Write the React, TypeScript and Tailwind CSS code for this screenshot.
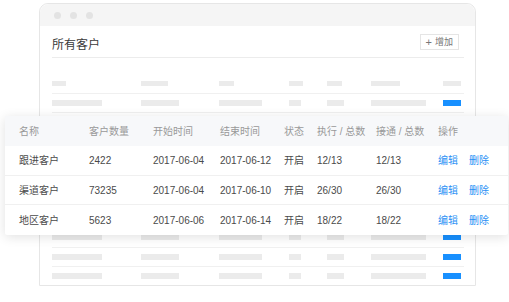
import React from "react";

const font = { fontFamily: '"Liberation Sans", "Noto Sans CJK SC", sans-serif' };

// skeleton column offsets / widths inside the window
const headBars = [
    { w: "w-[14px]", col: "w-[89px]" },
    { w: "w-[27px]", col: "w-[78px]" },
    { w: "w-[15px]", col: "w-[70px]" },
    { w: "w-[14px]", col: "w-[38px]" },
    { w: "w-[15px]", col: "w-[44px]" },
    { w: "w-[29px]", col: "w-[72px]" },
];

const rowBars = [
    { w: "w-[50px]", col: "w-[89px]" },
    { w: "w-[38px]", col: "w-[78px]" },
    { w: "w-[43px]", col: "w-[70px]" },
    { w: "w-[12px]", col: "w-[38px]" },
    { w: "w-[17px]", col: "w-[44px]" },
    { w: "w-[55px]", col: "w-[72px]" },
];

const customers = [
    { name: "跟进客户", count: "2422", start: "2017-06-04", end: "2017-06-12", status: "开启", exec: "12/13", conn: "12/13" },
    { name: "渠道客户", count: "73235", start: "2017-06-04", end: "2017-06-10", status: "开启", exec: "26/30", conn: "26/30" },
    { name: "地区客户", count: "5623", start: "2017-06-06", end: "2017-06-14", status: "开启", exec: "18/22", conn: "18/22" },
];

const cols = ["w-[70px]", "w-[64px]", "w-[67px]", "w-[64px]", "w-[33px]", "w-[59px]", "w-[62px]"];

function SkeletonRow({ last }: { last?: boolean }) {
    return (
        <div className={`flex h-[19.2px] items-center ${last ? "" : "border-b border-[#f0f0f0]"}`}>
            {rowBars.map((b, i) => (
                <div key={i} className={b.col}>
                    <div className={`h-[6px] ${b.w} bg-[#ebebeb]`} />
                </div>
            ))}
            <div className="h-[6px] w-[18px] bg-[#1890ff]" />
        </div>
    );
}

export default function App() {
    return (
        <div className="relative h-[302px] w-[509px] overflow-hidden bg-white" style={font}>
            <div className="pl-[39px] pt-[3px]">
                {/* Window */}
                <div className="h-[283px] w-[437px] rounded-t-[9px] border border-[#e6e6e6] bg-white">
                    {/* title bar */}
                    <div className="flex h-[22px] items-center gap-[9px] rounded-t-[9px] bg-[#f5f5f5] pl-[14px]">
                        <span className="h-[7px] w-[7px] rounded-full bg-[#e3e3e3]" />
                        <span className="h-[7px] w-[7px] rounded-full bg-[#e3e3e3]" />
                        <span className="h-[7px] w-[7px] rounded-full bg-[#e3e3e3]" />
                    </div>

                    <div className="pl-[12px] pr-[11px]">
                        {/* header */}
                        <div className="flex h-[32px] items-start justify-between border-b border-[#ececec] pr-[5px]">
                            <div className="mt-[11px] text-[12px] leading-[16px] text-[#3a3a3a]">所有客户</div>
                            <button className="mt-[8px] flex h-[16px] items-center gap-[3px] border border-[#e5e5e5] px-[5px] text-[9px] leading-none text-[#777]">
                                <span className="text-[11px] font-light">+</span>
                                <span>增加</span>
                            </button>
                        </div>

                        {/* skeleton table head */}
                        <div className="flex h-[36px] items-end border-b border-[#f0f0f0] pb-[7px]">
                            {headBars.map((b, i) => (
                                <div key={i} className={b.col}>
                                    <div className={`h-[5px] ${b.w} bg-[#ebebeb]`} />
                                </div>
                            ))}
                            <div className="h-[5px] w-[18px] bg-[#ebebeb]" />
                        </div>

                        {Array.from({ length: 10 }).map((_, i) => (
                            <SkeletonRow key={i} last={i === 9} />
                        ))}
                    </div>
                </div>
            </div>

            {/* Floating table */}
            <div className="absolute left-[5px] top-[116px] w-[503px] rounded-[2px] bg-white shadow-[0_2px_12px_rgba(0,0,0,0.12)]">
                <div className="flex h-[30px] items-center bg-[#f7f8fa] pl-[14px] text-[10px] text-[#999]">
                    <div className={cols[0]}>名称</div>
                    <div className={cols[1]}>客户数量</div>
                    <div className={cols[2]}>开始时间</div>
                    <div className={cols[3]}>结束时间</div>
                    <div className={cols[4]}>状态</div>
                    <div className={cols[5]}>执行 / 总数</div>
                    <div className={cols[6]}>接通 / 总数</div>
                    <div>操作</div>
                </div>
                {customers.map((c, i) => (
                    <div
                        key={c.name}
                        className={`flex h-[29.7px] items-center pl-[14px] text-[10px] text-[#4a4a4a] ${i < customers.length - 1 ? "border-b border-[#f0f0f0]" : ""}`}
                    >
                        <div className={cols[0]}>{c.name}</div>
                        <div className={cols[1]}>{c.count}</div>
                        <div className={cols[2]}>{c.start}</div>
                        <div className={cols[3]}>{c.end}</div>
                        <div className={cols[4]}>{c.status}</div>
                        <div className={cols[5]}>{c.exec}</div>
                        <div className={cols[6]}>{c.conn}</div>
                        <div className="flex gap-[11px] text-[#2a90f5]">
                            <span>编辑</span>
                            <span>删除</span>
                        </div>
                    </div>
                ))}
            </div>
        </div>
    );
}
